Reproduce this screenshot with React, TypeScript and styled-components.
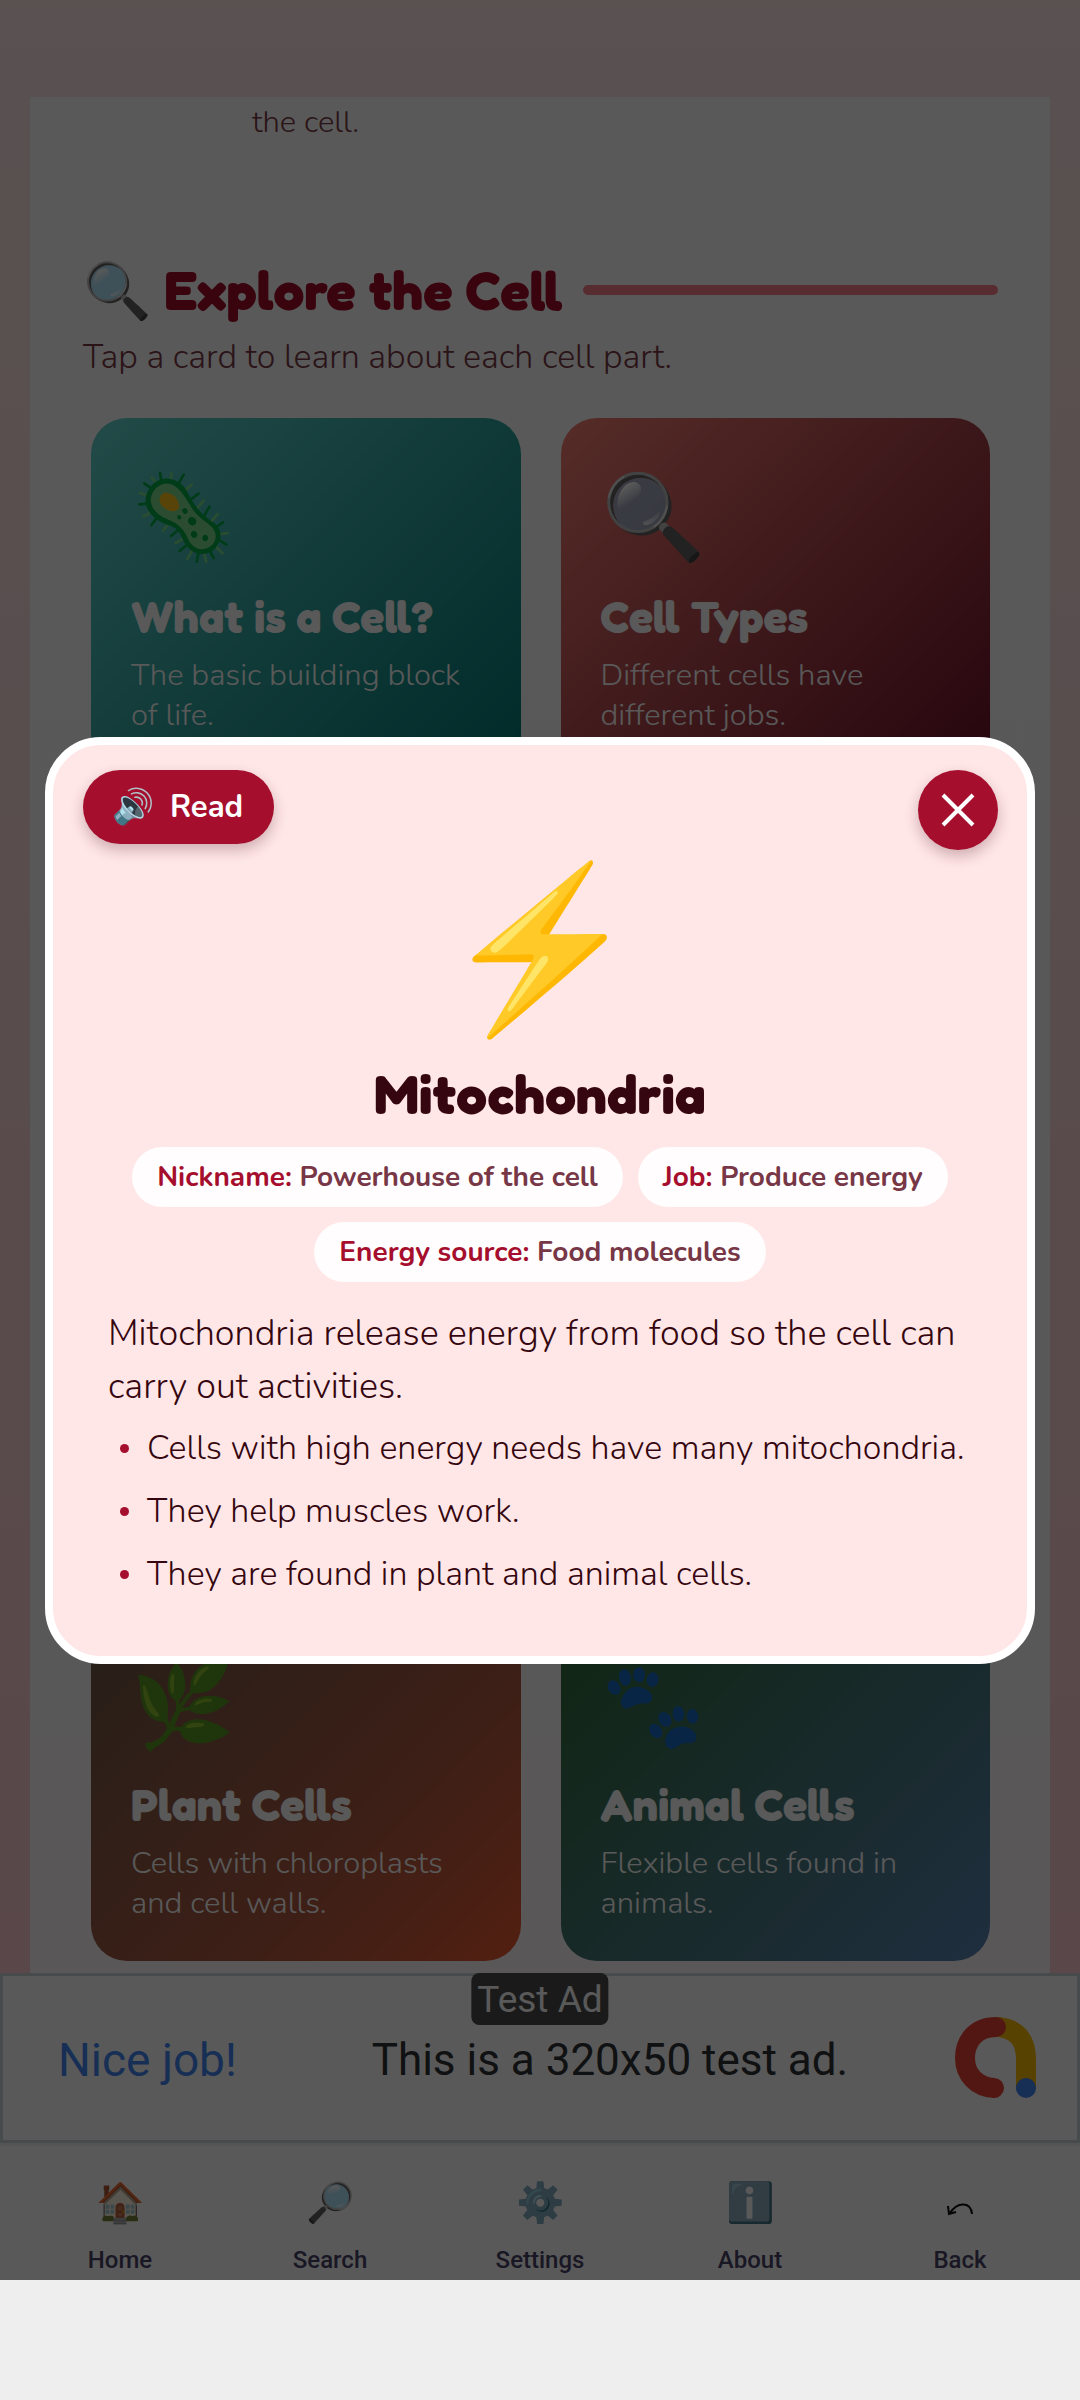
import React from "react";
import styled, { createGlobalStyle } from "styled-components";

const bodyFont = `Nunito, Lato, "Noto Sans", sans-serif`;
const displayFont = `"Fredoka One", Fredoka, "Baloo 2", Nunito, Lato, sans-serif`;
const crimson = "#a50e2d";
const ink = "#35060f";

const GlobalStyle = createGlobalStyle`
  *, *::before, *::after { box-sizing: border-box; }
  body { margin: 0; background: #eeeeee; font-family: ${bodyFont}; font-weight: 300; }
  h1, h2, h3, p, ul { margin: 0; padding: 0; }
  ul { list-style: none; }
  button { border: 0; font: inherit; cursor: pointer; }
  svg { display: block; flex: none; }
`;

const Page = styled.div`
  min-height: 100vh;
  display: flex;
  flex-direction: column;
`;

const Screen = styled.div`
  flex: 1;
  display: flex;
  flex-direction: column;
  padding-top: 97px;
  background: linear-gradient(180deg, #ffeae8 0%, #ffccd2 85%);
`;

const SystemBar = styled.div`
  position: relative;
  z-index: 20;
  height: 120px;
  background: #eeeeee;
`;

const Lesson = styled.main`
  flex: 1;
  display: flex;
  flex-direction: column;
  margin: 0 30px;
  padding: 5px 52px 12px 53px;
  background: linear-gradient(180deg, #ffffff, #fffafa);
`;

const Intro = styled.p`
  padding-left: 169px;
  font-size: 31px;
  line-height: 40px;
  color: #7a3a47;
`;

const SectionHead = styled.header`
  display: flex;
  align-items: center;
  gap: 20px;
  margin-top: 114px;
`;

const Heading = styled.h1`
  font-family: ${displayFont};
  font-size: 55px;
  line-height: 68px;
  font-weight: 700;
  color: ${crimson};
`;

const Rule = styled.span`
  flex: 1;
  height: 10px;
  border-radius: 5px;
  background: #f9808f;
`;

const Hint = styled.p`
  margin-top: 11px;
  font-size: 34px;
  line-height: 44px;
  color: #7a3a47;
`;

const CardGrid = styled.div`
  flex: 1;
  display: grid;
  grid-template-columns: 1fr 1fr;
  column-gap: 40px;
  align-content: space-between;
  margin-top: 39px;
  padding: 0 8px;
`;

const Card = styled.button<{ $fill: string }>`
  display: flex;
  flex-direction: column;
  align-items: flex-start;
  padding: 48px 40px 38px;
  border-radius: 36px;
  text-align: left;
  color: #ffffff;
  background: ${(p) => p.$fill};
`;

const CardTitle = styled.span`
  margin-top: 19px;
  font-family: ${displayFont};
  font-size: 45px;
  line-height: 52px;
  font-weight: 700;
`;

const CardText = styled.span`
  margin-top: 12px;
  font-size: 31px;
  line-height: 40px;
`;

const AdBanner = styled.aside`
  position: relative;
  display: flex;
  align-items: center;
  height: 170px;
  padding: 0 40px 0 55px;
  border: 3px solid #cfd6d6;
  background: #ffffff;
  font-family: "Google Sans", "Product Sans", Roboto, sans-serif;
  font-size: 44px;
  line-height: 50px;
  font-weight: 400;
`;

const AdBadge = styled.span`
  position: absolute;
  top: -3px;
  left: 50%;
  transform: translateX(-50%);
  padding: 2px 6px 0;
  border-radius: 8px;
  background: #4b4b4b;
  color: #ffffff;
  font-family: Roboto, sans-serif;
  font-size: 37px;
  line-height: 50px;
  white-space: nowrap;
`;

const AdLink = styled.a`
  padding-top: 4px;
  color: #4285f4;
  font-size: 46px;
  text-decoration: none;
`;

const AdText = styled.span`
  flex: 1;
  padding: 4px 0 0 28px;
  text-align: center;
  color: #303134;
`;

const NavBar = styled.nav`
  display: grid;
  grid-template-columns: repeat(5, 1fr);
  height: 137px;
  padding: 38px 15px 0;
  background: #ffffff;
  box-shadow: inset 0 3px 0 #f0f0f0;
`;

const NavItem = styled.a`
  display: flex;
  flex-direction: column;
  align-items: center;
  gap: 20px;
  color: #4a4468;
  font-family: Roboto, sans-serif;
  font-size: 24px;
  line-height: 30px;
  font-weight: 500;
  text-decoration: none;
`;

const Glyph = styled.span<{ $size: number; $line: number }>`
  font-size: ${(p) => p.$size}px;
  line-height: ${(p) => p.$line}px;
  font-weight: 400;
`;

const Backdrop = styled.div`
  position: fixed;
  inset: 0;
  z-index: 10;
  display: flex;
  align-items: center;
  justify-content: center;
  padding: 0 45px;
  background: rgba(0, 0, 0, 0.65);
`;

const Dialog = styled.section`
  flex: 1;
  border: 8px solid #ffffff;
  border-radius: 56px;
  padding-bottom: 56px;
  background: #ffe6e7;
  color: ${ink};
`;

const DialogBar = styled.div`
  display: flex;
  justify-content: space-between;
  align-items: flex-start;
  height: 105px;
  padding: 25px 29px 0 30px;
`;

const ReadButton = styled.button`
  display: flex;
  align-items: center;
  gap: 16px;
  height: 74px;
  padding: 0 31px 0 29px;
  border-radius: 37px;
  background: ${crimson};
  color: #ffffff;
  font-size: 31px;
  line-height: 40px;
  font-weight: 700;
  box-shadow: 0 6px 14px rgba(60, 0, 15, 0.25);
`;

const CloseButton = styled.button`
  display: grid;
  place-items: center;
  width: 80px;
  height: 80px;
  padding: 0;
  border-radius: 50%;
  background: ${crimson};
  box-shadow: 0 6px 14px rgba(60, 0, 15, 0.25);
`;

const DialogBody = styled.div`
  display: flex;
  flex-direction: column;
  align-items: center;
  padding: 11px 55px 0;
`;

const DialogTitle = styled.h2`
  margin-top: 21px;
  font-family: ${displayFont};
  font-size: 55px;
  line-height: 64px;
  font-weight: 700;
`;

const Chips = styled.ul`
  display: flex;
  flex-wrap: wrap;
  justify-content: center;
  gap: 15px;
  margin-top: 21px;
`;

const Chip = styled.li`
  padding: 0 25px;
  border-radius: 30px;
  background: #fffdfd;
  color: #773746;
  font-size: 28px;
  line-height: 60px;
  font-weight: 700;
`;

const ChipName = styled.span`
  color: ${crimson};
`;

const Summary = styled.p`
  align-self: stretch;
  margin-top: 25px;
  font-size: 36px;
  line-height: 53px;
`;

const Facts = styled.ul`
  align-self: stretch;
  display: flex;
  flex-direction: column;
  gap: 12px;
  margin-top: 10px;
  padding-left: 12px;
`;

const Fact = styled.li`
  display: flex;
  align-items: center;
  gap: 18px;
  font-size: 34px;
  line-height: 51px;

  &::before {
    content: "";
    width: 9px;
    height: 9px;
    border-radius: 50%;
    background: ${crimson};
  }
`;

const BackArrow = () => (
  <svg width="44" height="44" viewBox="0 0 44 44" aria-hidden="true">
    <path d="M34 33 C33 21 20 20 12 32 M10 25 L11 33 L18 31" fill="none" stroke="#0c0c0c" strokeWidth="2" />
  </svg>
);

const Cross = () => (
  <svg width="34" height="34" viewBox="0 0 34 34" aria-hidden="true">
    <path d="M2 2 L32 32 M32 2 L2 32" stroke="#ffffff" strokeWidth="4" />
  </svg>
);

const AdLogo = () => (
  <svg width="82" height="82" viewBox="0 0 82 82" aria-hidden="true">
    <path d="M40 10 C60 10 71 22 71 42 V72" fill="none" stroke="#fbbc04" strokeWidth="20" />
    <path d="M41 10 C20 10 10 25 10 41 C10 58 22 70 39 71" fill="none" stroke="#ea4335" strokeWidth="20" strokeLinecap="round" />
    <circle cx="71" cy="71" r="10" fill="#4285f4" />
  </svg>
);

const cards = [
  { title: "What is a Cell?", text: "The basic building block of life.", icon: "🦠", fill: "linear-gradient(135deg, #62d5ce, #007a76)" },
  { title: "Cell Types", text: "Different cells have different jobs.", icon: "🔍", fill: "linear-gradient(135deg, #f57f72, #6e1029)" },
  { title: "Plant Cells", text: "Cells with chloroplasts and cell walls.", icon: "🌿", fill: "linear-gradient(135deg, #6b5a48, #b05a42 65%, #ea5a30)" },
  { title: "Animal Cells", text: "Flexible cells found in animals.", icon: "🐾", fill: "linear-gradient(135deg, #2e6b35, #5b84b5)" },
];

const navItems = [
  { label: "Home", icon: "🏠" },
  { label: "Search", icon: "🔎" },
  { label: "Settings", icon: "⚙️" },
  { label: "About", icon: "ℹ️" },
  { label: "Back", icon: null },
];

const traits = [
  ["Nickname:", "Powerhouse of the cell"],
  ["Job:", "Produce energy"],
  ["Energy source:", "Food molecules"],
];

const facts = [
  "Cells with high energy needs have many mitochondria.",
  "They help muscles work.",
  "They are found in plant and animal cells.",
];

export default function App() {
  return (
    <Page>
      <GlobalStyle />
      <Screen>
        <Lesson>
          <Intro>the cell.</Intro>
          <SectionHead>
            <Heading>🔍 Explore the Cell</Heading>
            <Rule />
          </SectionHead>
          <Hint>Tap a card to learn about each cell part.</Hint>
          <CardGrid>
            {cards.map((c) => (
              <Card key={c.title} type="button" $fill={c.fill}>
                <Glyph $size={84} $line={106} aria-hidden="true">{c.icon}</Glyph>
                <CardTitle>{c.title}</CardTitle>
                <CardText>{c.text}</CardText>
              </Card>
            ))}
          </CardGrid>
        </Lesson>
        <AdBanner>
          <AdLink href="#ad">Nice job!</AdLink>
          <AdText>This is a 320x50 test ad.</AdText>
          <AdLogo />
          <AdBadge>Test Ad</AdBadge>
        </AdBanner>
        <NavBar>
          {navItems.map((n) => (
            <NavItem key={n.label} href={`#${n.label.toLowerCase()}`}>
              {n.icon ? <Glyph $size={39} $line={44} aria-hidden="true">{n.icon}</Glyph> : <BackArrow />}
              {n.label}
            </NavItem>
          ))}
        </NavBar>
      </Screen>
      <SystemBar />
      <Backdrop>
        <Dialog role="dialog" aria-modal="true" aria-labelledby="dialog-title">
          <DialogBar>
            <ReadButton type="button">
              <Glyph $size={34} $line={40} aria-hidden="true">🔊</Glyph>
              Read
            </ReadButton>
            <CloseButton type="button" aria-label="Close">
              <Cross />
            </CloseButton>
          </DialogBar>
          <DialogBody>
            <Glyph $size={160} $line={180} aria-hidden="true">⚡</Glyph>
            <DialogTitle id="dialog-title">Mitochondria</DialogTitle>
            <Chips>
              {traits.map(([name, value]) => (
                <Chip key={name}>
                  <ChipName>{name}</ChipName> {value}
                </Chip>
              ))}
            </Chips>
            <Summary>
              Mitochondria release energy from food so the cell can carry out activities.
            </Summary>
            <Facts>
              {facts.map((f) => (
                <Fact key={f}>{f}</Fact>
              ))}
            </Facts>
          </DialogBody>
        </Dialog>
      </Backdrop>
    </Page>
  );
}
